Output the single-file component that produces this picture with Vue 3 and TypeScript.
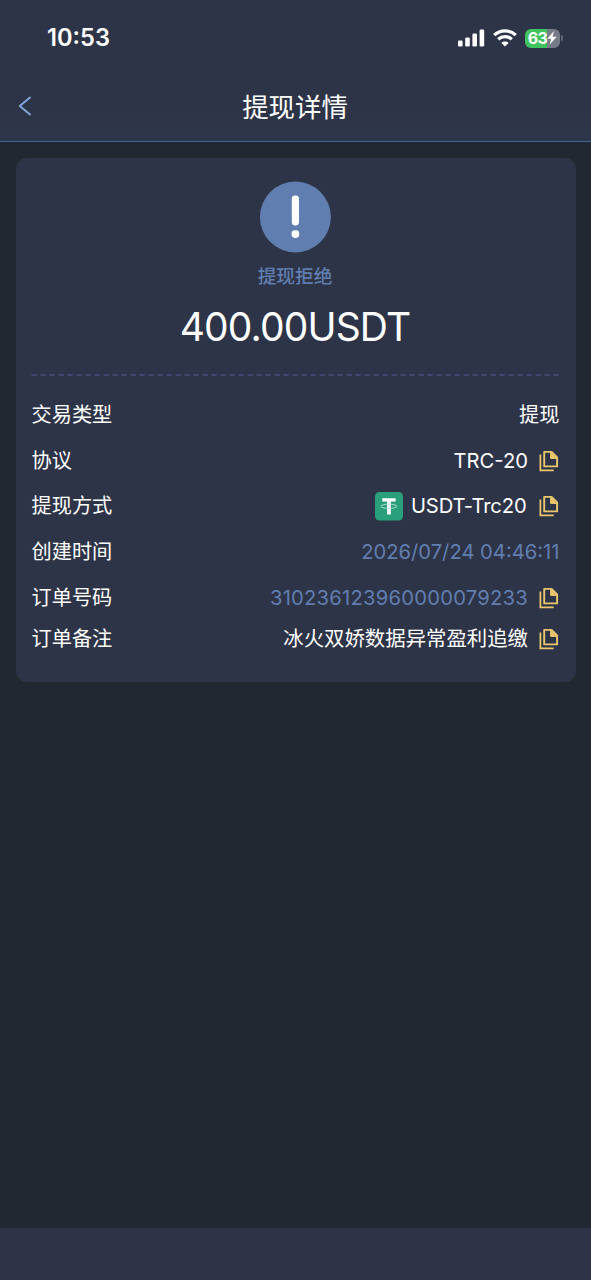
<script setup lang="ts">
interface DetailRow {
  label: string
  value: string
  tone?: 'blue'
  coin?: boolean
  copy?: boolean
  kind: string
}

const rows: DetailRow[] = [
  { label: '交易类型', value: '提现', kind: 'type' },
  { label: '协议', value: 'TRC-20', copy: true, kind: 'protocol' },
  { label: '提现方式', value: 'USDT-Trc20', coin: true, copy: true, kind: 'method' },
  { label: '创建时间', value: '2026/07/24 04:46:11', tone: 'blue', kind: 'time' },
  { label: '订单号码', value: '310236123960000079233', tone: 'blue', copy: true, kind: 'order' },
  { label: '订单备注', value: '冰火双娇数据异常盈利追缴', copy: true, kind: 'note' },
]
</script>

<template>
  <div class="screen">
    <header class="top">
      <div class="status">
        <span class="clock">10:53</span>
        <div class="indicators">
          <svg class="signal" width="27" height="18" viewBox="0 0 27 18" fill="#fff">
            <rect x="0" y="11.5" width="4.6" height="6" rx="1.3" />
            <rect x="7.2" y="8.5" width="4.6" height="9" rx="1.3" />
            <rect x="14.4" y="4.5" width="4.6" height="13" rx="1.3" />
            <rect x="21.6" y="0.5" width="4.6" height="17" rx="1.3" />
          </svg>
          <svg class="wifi" width="24" height="18" viewBox="0 0 24 18" fill="none" stroke="#fff">
            <path d="M1.2 6.1C7.2.4 16.8.4 22.8 6.1" stroke-width="3.3" />
            <path d="M5.2 10.2C9 6.7 15 6.7 18.8 10.2" stroke-width="3.2" />
            <path d="M12 17.6 8.4 13.9C10.3 12 13.7 12 15.6 13.9Z" fill="#fff" stroke="none" />
          </svg>
          <div class="battery">
            <div class="cell">
              <span class="percent">63</span>
              <svg width="10" height="14" viewBox="0 0 10 14" fill="#fff">
                <path d="M7 0 .3 7.8H4.2L2.5 13.8 9.7 5.7H5.6Z" />
              </svg>
            </div>
            <i class="nub"></i>
          </div>
        </div>
      </div>
      <nav class="nav">
        <svg class="back" width="14" height="20" viewBox="0 0 14 20" fill="none" stroke="#7fa7dc" stroke-width="1.9" stroke-linecap="round" stroke-linejoin="round">
          <path d="M12 1.4 1.8 10 12 18.6" />
        </svg>
        <h1>提现详情</h1>
        <span class="spacer"></span>
      </nav>
    </header>

    <main class="body">
      <section class="card">
        <div class="summary">
          <svg class="alert" width="72" height="72" viewBox="0 0 72 72">
            <circle cx="36.4" cy="36" r="35.5" fill="#607eb0" />
            <rect x="32.8" y="14.5" width="7.2" height="30" rx="3.4" fill="#fff" />
            <rect x="32.6" y="49.3" width="7.6" height="7.6" rx="3.3" fill="#fff" />
          </svg>
          <div class="state">提现拒绝</div>
          <div class="amount">400.00USDT</div>
        </div>
        <svg class="divider" width="529" height="2" viewBox="0 0 529 2">
          <path d="M.5 1H529" stroke="#485078" stroke-width="1.6" stroke-dasharray="5.4 3.6" />
        </svg>
        <div class="rows">
          <div v-for="row in rows" :key="row.label" class="row" :class="row.kind">
            <span class="label">{{ row.label }}</span>
            <div class="value" :class="row.tone">
              <svg v-if="row.coin" class="coin" width="28" height="29" viewBox="0 0 28 29">
                <rect width="28" height="28.5" rx="4.5" fill="#2a9f7b" />
                <path d="M7.3 6.3H20.6V9.6H15.8V22.4H12.1V9.6H7.3Z" fill="#fff" />
                <ellipse cx="13.9" cy="14.3" rx="8" ry="2.1" fill="none" stroke="#b9e2d3" stroke-width=".9" />
              </svg>
              <span class="text">{{ row.value }}</span>
              <svg v-if="row.copy" class="copy" width="20" height="22" viewBox="0 0 20 22" fill="none" stroke="#eac66d">
                <path d="M5.2 1.9H12.6L18.1 7.4V16.4H5.2Z" stroke-width="1.9" stroke-linejoin="round" />
                <path d="M11.6 2V8.4H18Z" fill="#eac66d" stroke-width="1" />
                <path d="M1.4 4.5V20.4H14.7" stroke-width="1.8" />
              </svg>
            </div>
          </div>
        </div>
      </section>
    </main>
    <footer class="bottom"></footer>
  </div>
</template>

<style>
body {
  margin: 0;
  background: #212831;
}
</style>

<style scoped>
.screen {
  display: flex;
  flex-direction: column;
  width: 591px;
  height: 1280px;
  overflow: hidden;
  background: #212831;
  color: #fff;
  font-family: Inter, "Noto Sans CJK SC", sans-serif;
}
.top {
  box-sizing: border-box;
  height: 142px;
  background: linear-gradient(#2e3447 80%, #2d364a);
  border-bottom: 1.5px solid #46658e;
}
.status {
  display: flex;
  align-items: center;
  justify-content: space-between;
  height: 76px;
  padding: 0 28px 0 47px;
}
.clock {
  font-size: 23.6px;
  font-weight: 600;
  line-height: 30px;
}
.indicators {
  display: flex;
  align-items: center;
}
.wifi {
  margin-left: 8px;
}
.battery {
  display: flex;
  align-items: center;
  gap: 1px;
  margin-left: 8px;
}
.cell {
  display: flex;
  align-items: center;
  justify-content: center;
  width: 35px;
  height: 19px;
  border-radius: 6px;
  background: linear-gradient(90deg, #3fc35e 63%, #777b88 63%);
}
.percent {
  font-size: 16px;
  font-weight: 700;
  line-height: 19px;
  letter-spacing: -0.5px;
}
.nub {
  width: 2px;
  height: 6px;
  border-radius: 0 2px 2px 0;
  background: #646977;
}
.nav {
  display: flex;
  align-items: center;
  justify-content: space-between;
  height: 60px;
  padding: 0 19px 0 18px;
}
.spacer {
  width: 14px;
}
h1 {
  margin: 2px 0 0;
  font-size: 26.4px;
  font-weight: 400;
  line-height: 40px;
}
.body {
  flex: 1;
  padding: 16px 16px 0;
}
.card {
  box-sizing: border-box;
  width: 559.5px;
  height: 524px;
  padding: 23px 16.5px 0 15px;
  border-radius: 11px;
  background: #2e3447;
}
.summary {
  display: flex;
  flex-direction: column;
  align-items: center;
  height: 193px;
}
.alert {
  display: block;
}
.state {
  margin-top: 9.5px;
  color: #607eb0;
  font-size: 18.7px;
  font-weight: 500;
  line-height: 28px;
}
.amount {
  margin-top: 12.5px;
  font-size: 39px;
  line-height: 48px;
  letter-spacing: -0.85px;
  white-space: nowrap;
}
.divider {
  display: block;
}
.rows {
  padding-top: 16px;
}
.row {
  display: flex;
  align-items: center;
  justify-content: space-between;
  height: 45.8px;
  font-size: 20.2px;
  line-height: 30px;
}
.label {
  margin-left: 0.5px;
}
.row.type .value,
.row.time .value {
  margin-right: -0.5px;
}
.row.note {
  height: 36px;
}
.row.note .text {
  font-size: 20.4px;
}
.row.order .text {
  letter-spacing: 0.24px;
}
.row.method .text {
  letter-spacing: -0.15px;
}
.value {
  display: flex;
  align-items: center;
  white-space: nowrap;
}
.value.blue {
  color: #607eb0;
}
.coin {
  margin-right: 8px;
}
.copy {
  margin-left: 11px;
}
.row.method .copy {
  margin-left: 12.5px;
}
.bottom {
  height: 52px;
  background: #2e3347;
}
</style>
